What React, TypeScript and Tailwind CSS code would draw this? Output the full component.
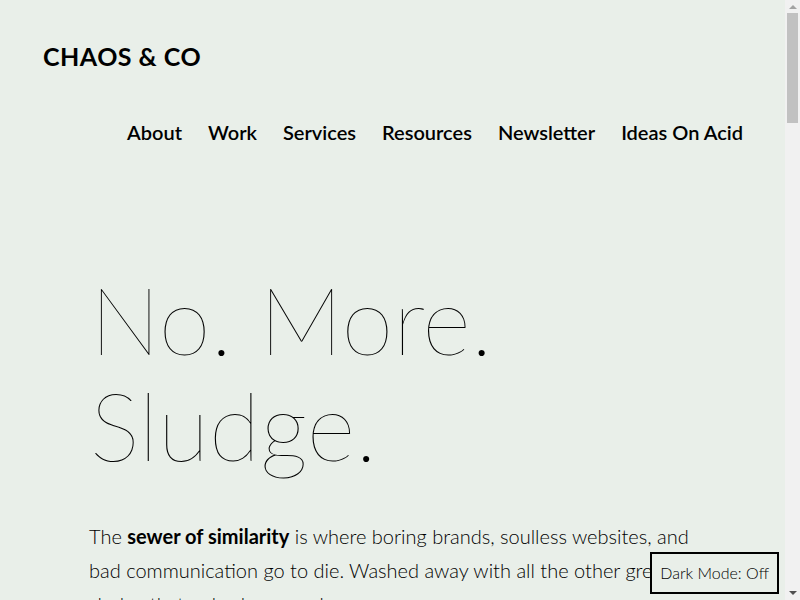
const navItems = ["About", "Work", "Services", "Resources", "Newsletter", "Ideas On Acid"];

export default function App() {
  return (
    <div className="min-h-[1400px] bg-[#e9efe9] text-black font-['Lato','Noto_Sans',sans-serif]">
      <header className="pl-[43px] pr-[57px] pt-[42px]">
        <div className="text-[25px] font-bold leading-[28px] tracking-[0.5px]">CHAOS &amp; CO</div>
        <nav className="mt-[50px] flex justify-end gap-[26px]">
          {navItems.map((item) => (
            <a key={item} href="#" className="text-[20px] font-semibold leading-[24px]">
              {item}
            </a>
          ))}
        </nav>
      </header>

      <main className="pl-[89px] pr-[75px] pt-[122px]">
        <h1 className="pl-[1px] text-[94px] font-thin leading-[106px]">
          No. More.
          <br />
          Sludge.
        </h1>
        <p className="mt-[41px] max-w-[620px] text-[20px] font-light leading-[34px] text-black">
          The <strong className="font-bold">sewer of similarity</strong> is where boring brands, soulless
          websites, and bad communication go to die. Washed away with all the other grey sludge that nobody remembers.
        </p>
      </main>

      {/* page scrollbar as it shows in the browser */}
      <div className="fixed top-0 right-0 flex h-screen w-[15px] flex-col items-center bg-[#f1f1f1]">
        <div className="mt-[5px] h-0 w-0 border-x-[4px] border-b-[4px] border-x-transparent border-b-[#a3a3a3]" />
        <div className="mt-[4px] h-[110px] w-[11px] bg-[#c1c1c1]" />
        <div className="mt-auto mb-[5px] h-0 w-0 border-x-[4px] border-t-[4px] border-x-transparent border-t-[#505050]" />
      </div>

      <button className="fixed right-[21px] bottom-[6px] border-2 border-black bg-[#e9efe9] px-[8px] py-[9px] text-[16px] font-light leading-[20px]">
        Dark Mode: Off
      </button>
    </div>
  );
}
